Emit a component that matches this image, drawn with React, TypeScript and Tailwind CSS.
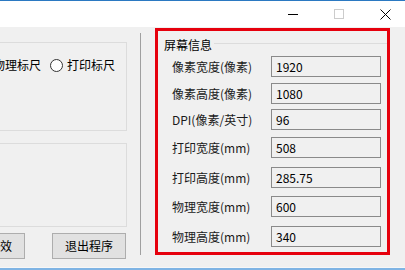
import React from "react";

const rows: { label: string; value: string; mt: string }[] = [
  { label: "像素宽度(像素)", value: "1920", mt: "mt-[3px]" },
  { label: "像素高度(像素)", value: "1080", mt: "mt-[6px]" },
  { label: "DPI(像素/英寸)", value: "96", mt: "mt-[5px]" },
  { label: "打印宽度(mm)", value: "508", mt: "mt-[7px]" },
  { label: "打印高度(mm)", value: "285.75", mt: "mt-[9px]" },
  { label: "物理宽度(mm)", value: "600", mt: "mt-[8px]" },
  { label: "物理高度(mm)", value: "340", mt: "mt-[9px]" },
];

export default function App() {
  return (
    <div
      className="w-[405px] h-[270px] overflow-hidden flex flex-col bg-[#f0f0f0] text-[12px] leading-[16px] text-[#000]"
      style={{ fontFamily: '"Noto Sans CJK SC", "Noto Sans", sans-serif' }}
    >
      <div className="h-px bg-[#2b79c2] shrink-0" />
      <div className="h-[26px] bg-white shrink-0 flex items-center justify-end mr-[-3px]">
        <div className="w-[46px] h-full flex items-center justify-center">
          <div className="w-[10px] h-px bg-black" />
        </div>
        <div className="w-[46px] h-full flex items-center justify-center">
          <div className="w-[10px] h-[10px] border border-[#cccccc]" />
        </div>
        <div className="w-[46px] h-full flex items-center justify-center">
          <svg width="11" height="11" viewBox="0 0 11 11">
            <path d="M0.5 0.5 L10.5 10.5 M10.5 0.5 L0.5 10.5" stroke="#000" strokeWidth="1" fill="none" />
          </svg>
        </div>
      </div>
      <div className="flex-1 flex min-h-0">
        {/* left column */}
        <div className="w-[127px] shrink-0 flex flex-col pt-[15px]">
          <div className="h-[89px] border border-l-0 border-[#dcdcdc] flex flex-col">
            <div className="mt-[14px] h-[16px] flex items-center justify-end pr-[11px] whitespace-nowrap">
              <span className="shrink-0">物理标尺</span>
              <span className="ml-[9px] shrink-0 w-[13px] h-[13px] rounded-full border border-[#333] bg-white" />
              <span className="ml-[4px] shrink-0">打印标尺</span>
            </div>
          </div>
          <div className="mt-[12px] h-[84px] border border-l-0 border-[#dcdcdc]" />
          <div className="mt-[6px] flex">
            <div className="w-[25px] h-[26px] border border-l-0 border-[#adadad] bg-[#e1e1e1] flex items-center justify-end pr-[12px] whitespace-nowrap">
              效
            </div>
            <div className="ml-[27px] w-[74px] h-[26px] border border-[#adadad] bg-[#e1e1e1] flex items-center justify-center">
              退出程序
            </div>
          </div>
        </div>
        {/* splitter */}
        <div className="ml-[13px] mt-[6px] w-px h-[222px] bg-[#a0a0a0] shrink-0" />
        {/* red box */}
        <div className="ml-[14px] mt-[1px] w-[235px] h-[227px] border-[3px] border-[#e6000d] shrink-0 flex flex-col">
          <div className="mt-[6px] pl-[6px] h-[16px] flex">
            <span className="whitespace-nowrap">屏幕信息</span>
            <div className="flex-1 h-px bg-[#dcdcdc] mt-[6px] ml-[2px]" />
          </div>
          {rows.map((r) => (
            <div key={r.label} className={`${r.mt} flex items-center pl-[14px]`}>
              <span className="w-[99px] whitespace-nowrap text-[#1a1a1a]">{r.label}</span>
              <div className="w-[110px] h-[21px] border border-[#8a8a8a] bg-[#f0f0f0] flex items-center pl-[4px]">
                {r.value}
              </div>
            </div>
          ))}
        </div>
      </div>
      <div className="h-px bg-[#f7f7f7] shrink-0" />
      <div className="h-[2px] bg-[#7fb4e4] shrink-0" />
    </div>
  );
}
